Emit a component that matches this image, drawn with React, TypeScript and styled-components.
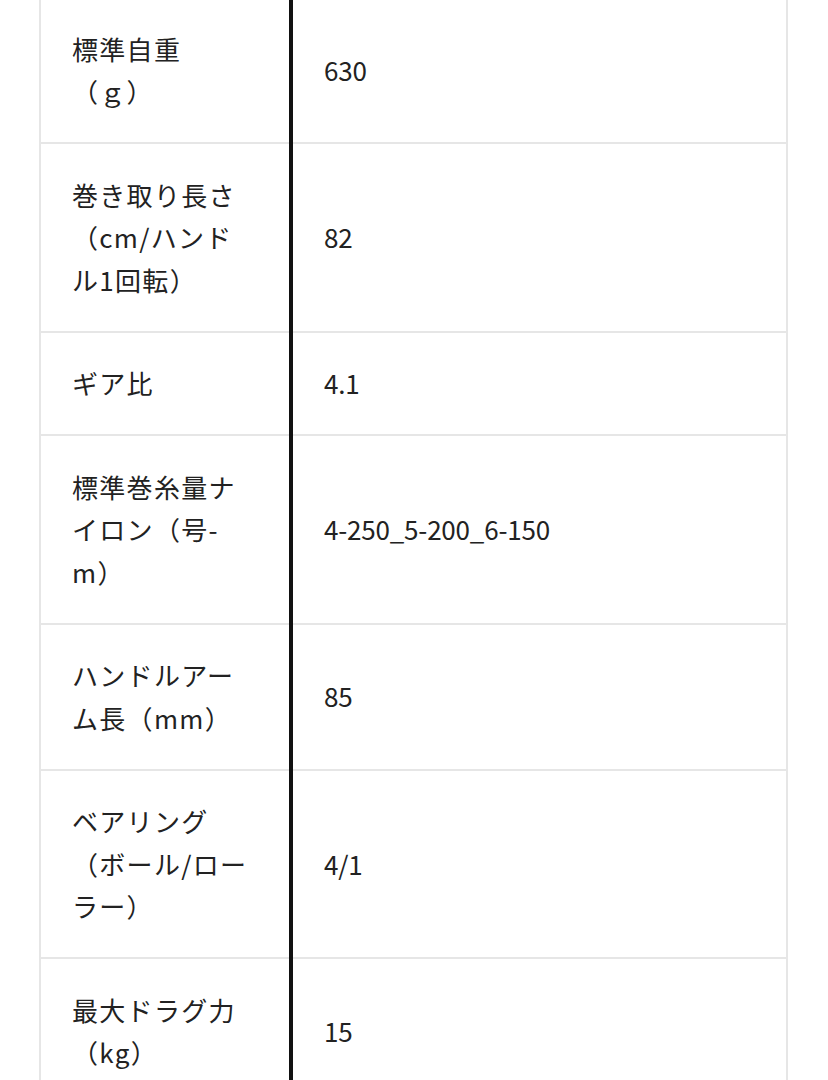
import React from 'react';
import styled, { createGlobalStyle } from 'styled-components';

const GlobalStyle = createGlobalStyle`
  html, body {
    margin: 0;
    padding: 0;
    background: #fff;
  }
  body {
    font-family: "Noto Sans CJK JP", "Noto Sans", sans-serif;
    color: #222;
  }
`;

const Page = styled.div`
  padding: 0 40px 0 39px;
  overflow: hidden;
  height: 1080px;
`;

const SpecTable = styled.table`
  width: 100%;
  margin-top: -4px;
  border-collapse: collapse;
  table-layout: fixed;
  border: 2px solid #e6e6e6;
`;

const Row = styled.tr`
  border-bottom: 2px solid #e6e6e6;
`;

const LabelCell = styled.th`
  width: 186px;
  padding: 29.5px 31px;
  border-right: 4px solid #111;
  font-size: 26px;
  line-height: 42.5px;
  letter-spacing: 1.3px;
  font-weight: 400;
  text-align: left;
  vertical-align: middle;
  line-break: strict;
  text-spacing-trim: space-all;
`;

const ValueCell = styled.td`
  padding: 29.5px 31px;
  font-size: 26px;
  line-height: 42.5px;
  letter-spacing: -0.2px;
  vertical-align: middle;
`;

const specs: [string, string][] = [
  ['標準自重（ｇ）', '630'],
  ['巻き取り長さ（cm/ハンドル1回転）', '82'],
  ['ギア比', '4.1'],
  ['標準巻糸量ナイロン（号-m）', '4-250_5-200_6-150'],
  ['ハンドルアーム長（mm）', '85'],
  ['ベアリング（ボール/ローラー）', '4/1'],
  ['最大ドラグ力（kg）', '15'],
];

export default function App() {
  return (
    <>
      <GlobalStyle />
      <Page>
        <SpecTable>
          <tbody>
            {specs.map(([label, value]) => (
              <Row key={label}>
                <LabelCell>{label}</LabelCell>
                <ValueCell>{value}</ValueCell>
              </Row>
            ))}
          </tbody>
        </SpecTable>
      </Page>
    </>
  );
}
